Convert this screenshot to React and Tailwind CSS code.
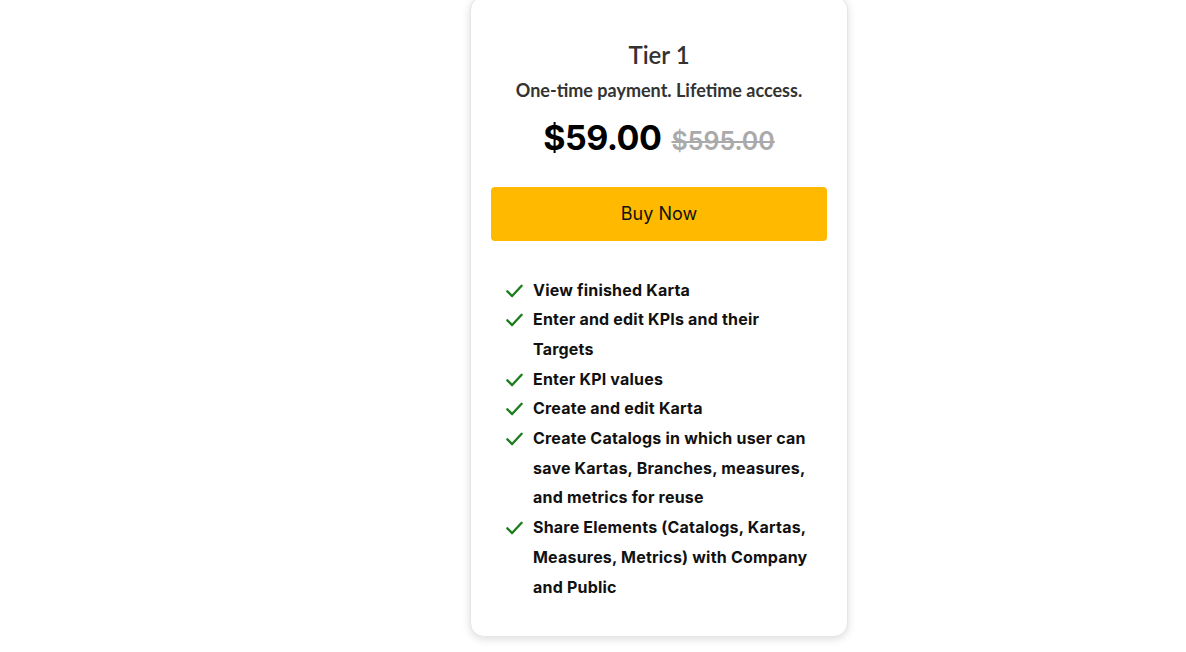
import React from "react";

const FEATURES = [
  "View finished Karta",
  "Enter and edit KPIs and their Targets",
  "Enter KPI values",
  "Create and edit Karta",
  "Create Catalogs in which user can save Kartas, Branches, measures, and metrics for reuse",
  "Share Elements (Catalogs, Kartas, Measures, Metrics) with Company and Public",
];

function Check() {
  return (
    <svg className="w-[19px] h-[19px] shrink-0 mt-[5px]" viewBox="0 0 24 24" fill="none" stroke="#1e7e1e" strokeWidth={3} strokeLinecap="round" strokeLinejoin="round">
      <path d="M3 13l6 6L21 6" />
    </svg>
  );
}

export default function App() {
  return (
    <div className="min-h-screen bg-white font-['Inter',sans-serif]">
      <div className="ml-[470px] -mt-[4px] w-[378px] rounded-[14px] bg-white shadow-[0_2px_8px_rgba(0,0,0,0.14)] border border-[#e6e6e6] pt-[42px] pb-[34px] px-[20px]">
        <h2 className="text-center font-['Lato',sans-serif] text-[24px] leading-[32px] font-semibold text-[#333]">Tier 1</h2>
        <p className="mt-[7px] text-center font-['Lato',sans-serif] text-[18px] leading-[24px] font-bold text-[#333]">
          One-time payment. Lifetime access.
        </p>
        <div className="mt-[14px] flex items-baseline justify-center gap-[10px]">
          <span className="text-[34px] leading-[44px] font-bold text-black tracking-[-0.5px]">$59.00</span>
          <span className="text-[25px] font-semibold text-[#aaa] line-through">$595.00</span>
        </div>
        <button className="mt-[26px] w-full h-[54px] rounded-[4px] bg-[#ffba00] text-[18px] text-[#111]">
          Buy Now
        </button>
        <ul className="mt-[35px] pl-[14px] pr-[14px]">
          {FEATURES.map((f) => (
            <li key={f} className="flex gap-[9px]">
              <Check />
              <span className="text-[16px] leading-[29.7px] font-bold tracking-[0.2px] text-[#111]">{f}</span>
            </li>
          ))}
        </ul>
      </div>
    </div>
  );
}
